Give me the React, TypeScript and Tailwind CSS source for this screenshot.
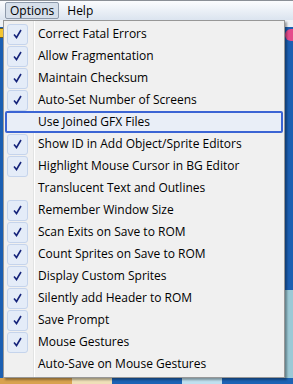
import React from 'react';

interface Item {
  label: string;
  checked: boolean;
  active?: boolean;
}

const items: Item[] = [
  { label: 'Correct Fatal Errors', checked: true },
  { label: 'Allow Fragmentation', checked: true },
  { label: 'Maintain Checksum', checked: true },
  { label: 'Auto-Set Number of Screens', checked: true },
  { label: 'Use Joined GFX Files', checked: false, active: true },
  { label: 'Show ID in Add Object/Sprite Editors', checked: true },
  { label: 'Highlight Mouse Cursor in BG Editor', checked: true },
  { label: 'Translucent Text and Outlines', checked: false },
  { label: 'Remember Window Size', checked: true },
  { label: 'Scan Exits on Save to ROM', checked: true },
  { label: 'Count Sprites on Save to ROM', checked: true },
  { label: 'Display Custom Sprites', checked: true },
  { label: 'Silently add Header to ROM', checked: true },
  { label: 'Save Prompt', checked: true },
  { label: 'Mouse Gestures', checked: true },
  { label: 'Auto-Save on Mouse Gestures', checked: false },
];

const Check = () => (
  <div className="w-[21px] h-[21px] rounded-[3px] border border-[#c5d4ec] bg-[#e4ecf8] flex items-center justify-center">
    <svg width="9" height="10" viewBox="0 0 9 10">
      <path d="M1 5.5 L3.5 8.5 L8 1" fill="none" stroke="#15237a" strokeWidth="1.6" />
    </svg>
  </div>
);

const App: React.FC = () => {
  return (
    <div className="relative w-[293px] h-[384px] overflow-hidden bg-[#1b5fb2] text-[12px] text-black" style={{ fontFamily: '"Open Sans", "Noto Sans", sans-serif' }}>
      {/* menu bar */}
      <div className="h-[20px] flex items-center gap-[4px] px-[5px] border-t border-[#8a8f96] bg-gradient-to-b from-[#fbfcfe] to-[#dbe4ef]">
        <div className="h-[17px] px-[4px] flex items-center border border-[#8e9aab] rounded-[2px] bg-[#d6dfea] leading-none">Options</div>
        <div className="px-[4px] leading-none">Help</div>
      </div>

      {/* background app strips */}
      <div className="absolute left-0 top-[20px] w-full h-[7px] bg-[#eef1f5]" />
      <div className="absolute left-0 top-[28px] w-[4px] h-[10px] border-y border-[#6b5a1c] bg-[#f4c531]" />
      <div className="absolute right-0 top-[29px] w-[8px] h-[12px] rounded-l-full bg-[#e54c8c]" />
      <div className="absolute right-0 top-[290px] w-[8px] h-[88px] bg-[#9cc9d6]" />
      <div className="absolute left-0 bottom-0 w-full h-[6px] flex">
        <div className="w-[72px] bg-[#d8a24f]" />
        <div className="w-[40px] bg-[#efe0b8]" />
        <div className="w-[70px] bg-[#1c63b5]" />
        <div className="w-[40px] bg-[#bfe0ef]" />
        <div className="flex-1 bg-[#1c63b5]" />
      </div>

      {/* dropdown */}
      <div className="absolute left-[3px] top-[20px] w-[282px] h-[358px] border border-[#979797] bg-[#f0f0f0] py-[2px] shadow-[2px_2px_2px_rgba(0,0,0,0.35)]">
        <div className="absolute left-[29px] top-0 bottom-0 w-[2px] border-l border-[#e2e3e3] bg-white" />
        {items.map((it) => (
          <div
            key={it.label}
            className={
              'relative h-[22px] flex items-center ' +
              (it.active ? 'mx-[1px] border-2 border-[#3b64d4] rounded-[2px] bg-[#e9eef7]' : 'mx-[3px]')
            }
          >
            <div className="w-[21px] flex items-center">
              {it.checked && <Check />}
            </div>
            <span className="ml-[10px] whitespace-nowrap">{it.label}</span>
          </div>
        ))}
      </div>
    </div>
  );
};

export default App;
